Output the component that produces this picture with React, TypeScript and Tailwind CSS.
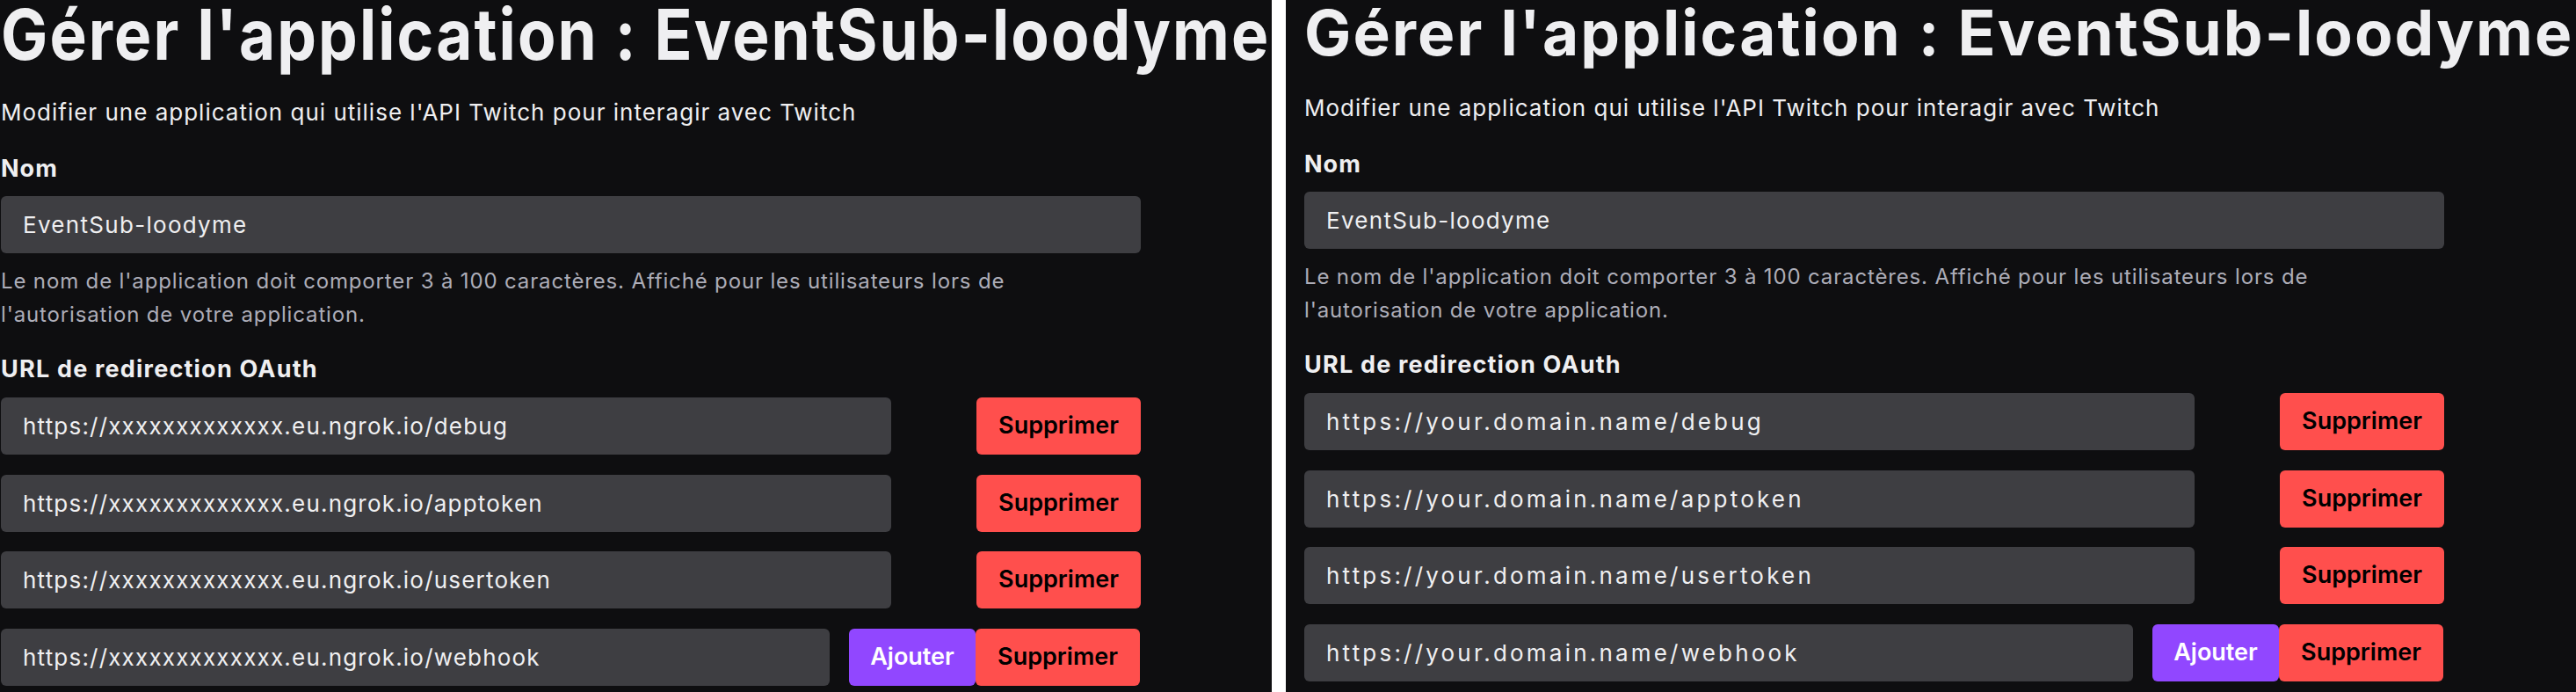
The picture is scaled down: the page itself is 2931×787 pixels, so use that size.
import React from 'react';

const leftUrls = [
  'https://xxxxxxxxxxxxx.eu.ngrok.io/debug',
  'https://xxxxxxxxxxxxx.eu.ngrok.io/apptoken',
  'https://xxxxxxxxxxxxx.eu.ngrok.io/usertoken',
  'https://xxxxxxxxxxxxx.eu.ngrok.io/webhook',
];

const rightUrls = [
  'https://your.domain.name/debug',
  'https://your.domain.name/apptoken',
  'https://your.domain.name/usertoken',
  'https://your.domain.name/webhook',
];

const Field: React.FC<{ value: string; width: string; track: string }> = ({ value, width, track }) => (
  <div
    className={`flex h-[65px] items-center rounded-[6px] bg-[#3e3e42] pl-[25px] text-[26px] text-[#efeff1] ${track} ${width}`}
  >
    {value}
  </div>
);

const DeleteButton: React.FC<{ className?: string }> = ({ className = '' }) => (
  <button className={`h-[65px] w-[187px] rounded-[6px] bg-[#ff4f4d] text-[27px] font-semibold text-black ${className}`}>
    Supprimer
  </button>
);

interface PanelProps {
  urls: string[];
  className: string;
  headBox: string;
  headingClass: string;
  urlTrack: string;
}

const Panel: React.FC<PanelProps> = ({ urls, className, headBox, headingClass, urlTrack }) => {
  const last = urls.length - 1;
  return (
    <div className={`h-full overflow-hidden bg-[#0e0e10] text-[#efeff1] ${className}`}>
      <div className="w-[1297px]">
        {/* Header */}
        <div className={`flex items-start ${headBox}`}>
          <h1 className={`whitespace-nowrap text-[71px] font-bold leading-[71px] tracking-[2.1px] ${headingClass}`}>
            Gérer l'application : EventSub-loodyme
          </h1>
        </div>
        <p className="mt-[35px] text-[26px] leading-[32px] tracking-[1px]">
          Modifier une application qui utilise l'API Twitch pour interagir avec Twitch
        </p>

        {/* Nom */}
        <label className="mt-[32px] block text-[27px] font-bold leading-[32px] tracking-[1px]">Nom</label>
        <div className="mt-[15px]">
          <Field value="EventSub-loodyme" width="w-full" track="tracking-[1.3px]" />
        </div>
        <p className="mt-[13px] max-w-[1240px] text-[24px] leading-[38px] tracking-[0.85px] text-[#adadb8]">
          Le nom de l'application doit comporter 3 à 100 caractères. Affiché pour les utilisateurs lors de
          l'autorisation de votre application.
        </p>

        {/* Redirect URLs */}
        <label className="mt-[27px] block text-[27px] font-bold leading-[32px] tracking-[1.2px]">
          URL de redirection OAuth
        </label>
        <div className="mt-[16px] flex flex-col gap-[22.5px]">
          {urls.map((url, i) =>
            i < last ? (
              <div key={url} className="flex">
                <Field value={url} width="w-[1013px]" track={urlTrack} />
                <DeleteButton className="ml-auto" />
              </div>
            ) : (
              <div key={url} className="flex">
                <Field value={url} width="w-[943px]" track={urlTrack} />
                <button className="ml-[22px] h-[65px] w-[144px] rounded-[6px] bg-[#9147ff] text-[27px] font-semibold text-white">
                  Ajouter
                </button>
                <DeleteButton />
              </div>
            )
          )}
        </div>
      </div>
    </div>
  );
};

export default function App() {
  return (
    <div className="flex h-[787px] w-[2931px] bg-white font-['Inter',sans-serif]">
      <Panel
        urls={leftUrls}
        className="w-[1447px] shrink-0 pl-px"
        headBox="h-[77px]"
        headingClass="origin-top -translate-y-[1px] scale-y-[1.13]"
        urlTrack="tracking-[1.2px]"
      />
      <div className="w-[16px] shrink-0" />
      <Panel
        urls={rightUrls}
        className="w-[1468px] shrink-0 pl-[21px]"
        headBox="h-[72px]"
        headingClass="mt-[2px]"
        urlTrack="tracking-[3.2px]"
      />
    </div>
  );
}
